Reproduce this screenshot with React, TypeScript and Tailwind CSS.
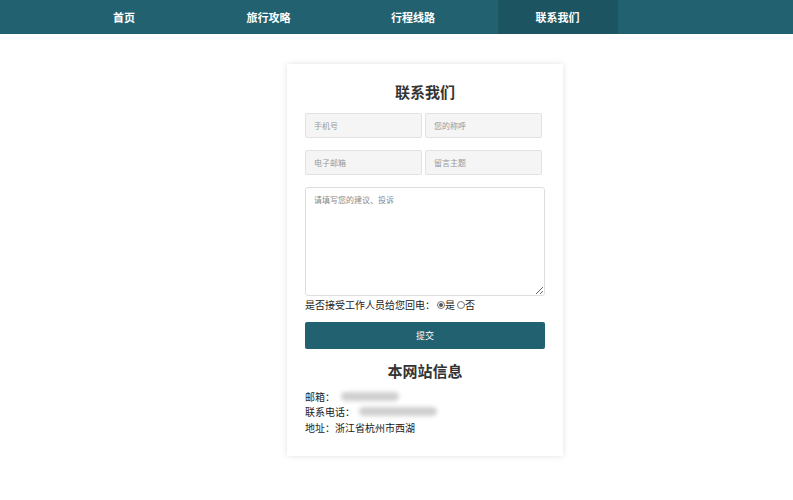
import React from "react";

const font = { fontFamily: '"Microsoft YaHei", "Noto Sans CJK SC", "Noto Sans", sans-serif' };

export default function App() {
  const nav = ["首页", "旅行攻略", "行程线路", "联系我们"];
  return (
    <div className="w-[793px] h-[500px] bg-white" style={font}>
      <div className="h-[34px] bg-[#22616f] flex pl-[64px] gap-[24.5px]">
        {nav.map((n, i) => (
          <div
            key={n}
            className={`w-[120px] h-full flex items-center justify-center text-white text-[11px] font-bold ${i === 3 ? "bg-[#1c5462]" : ""}`}
          >
            {n}
          </div>
        ))}
      </div>
      <div className="flex pl-[287px] pt-[30px]">
        <div className="w-[276px] h-[392px] bg-white shadow-[0_0_6px_rgba(0,0,0,0.12)] px-[18px] pt-[18px] flex flex-col">
          <div className="text-center text-[15px] font-bold text-[#333] leading-[20px]">联系我们</div>
          <div className="mt-[11px] flex gap-[3px]">
            <input className="w-[117px] h-[25px] bg-[#f5f5f5] border border-[#e2e2e2] rounded-[2px] px-[8px] text-[8px] placeholder:text-[#999] outline-none" placeholder="手机号" />
            <input className="w-[117px] h-[25px] bg-[#f5f5f5] border border-[#e2e2e2] rounded-[2px] px-[8px] text-[8px] placeholder:text-[#999] outline-none" placeholder="您的称呼" />
          </div>
          <div className="mt-[12px] flex gap-[3px]">
            <input className="w-[117px] h-[25px] bg-[#f5f5f5] border border-[#e2e2e2] rounded-[2px] px-[8px] text-[8px] placeholder:text-[#999] outline-none" placeholder="电子邮箱" />
            <input className="w-[117px] h-[25px] bg-[#f5f5f5] border border-[#e2e2e2] rounded-[2px] px-[8px] text-[8px] placeholder:text-[#999] outline-none" placeholder="留言主题" />
          </div>
          <textarea
            className="mt-[12px] w-[240px] h-[109px] border border-[#dedede] rounded-[3px] px-[8px] py-[6px] text-[8px] placeholder:text-[#888] outline-none resize-y"
            placeholder="请填写您的建议、投诉"
          />
          <div className="mt-[1px] flex items-center text-[10px] text-[#222] leading-[16px]">
            <span>是否接受工作人员给您回电：</span>
            <span className="ml-[2px] inline-flex items-center">
              <span className="w-[8px] h-[8px] rounded-full border border-[#777] flex items-center justify-center">
                <span className="w-[4px] h-[4px] rounded-full bg-[#555]" />
              </span>
              <span>是</span>
            </span>
            <span className="ml-[2px] inline-flex items-center">
              <span className="w-[8px] h-[8px] rounded-full border border-[#777]" />
              <span>否</span>
            </span>
          </div>
          <button className="mt-[9px] w-[240px] h-[27px] bg-[#22616f] rounded-[2px] text-white text-[9px]">提交</button>
          <div className="mt-[12px] text-center text-[15px] font-bold text-[#333] leading-[20px]">本网站信息</div>
          <div className="mt-[8px] text-[10px] text-[#222] leading-[15px]">
            <div className="flex items-center">
              <span>邮箱：</span>
              <span className="ml-[6px] w-[58px] h-[9px] rounded-full bg-[#cfcfcf] blur-[2px]" />
            </div>
            <div className="flex items-center">
              <span>联系电话：</span>
              <span className="ml-[4px] w-[78px] h-[9px] rounded-full bg-[#cfcfcf] blur-[2px]" />
            </div>
            <div className="mt-[1px]">地址：浙江省杭州市西湖</div>
          </div>
        </div>
      </div>
    </div>
  );
}
